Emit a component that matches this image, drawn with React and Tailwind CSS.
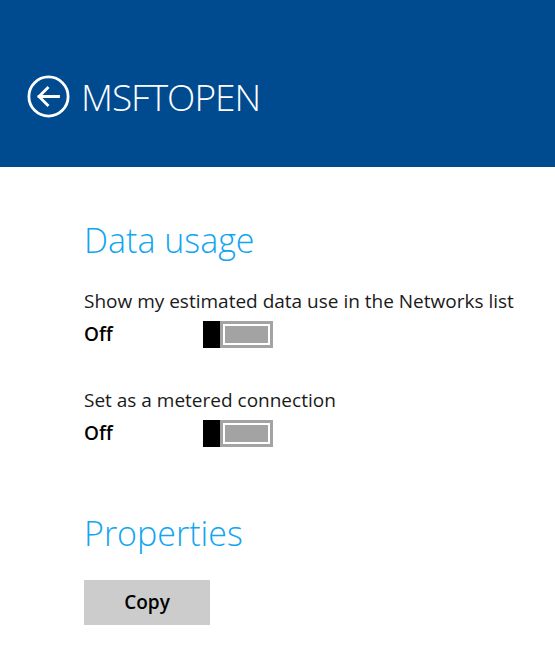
import React from 'react';

const Toggle = () => (
  <div className="flex h-[27px] w-[70px]">
    <div className="w-[17px] h-full bg-black" />
    <div className="flex-1 h-full bg-[#a3a3a3] p-[3px]">
      <div className="h-full w-full border-2 border-white bg-[#a3a3a3]" />
    </div>
  </div>
);

const Setting = ({ label }) => (
  <div>
    <div className="text-[19px] leading-[28px] text-[#1a1a1a]">{label}</div>
    <div className="flex items-center h-[27px] mt-[6px]">
      <span className="w-[119px] text-[19px] font-semibold text-black">Off</span>
      <Toggle />
    </div>
  </div>
);

export default function App() {
  return (
    <div className="w-[555px] h-[650px] bg-white overflow-hidden" style={{ fontFamily: '"Open Sans", "Noto Sans", sans-serif' }}>
      <header className="h-[167px] bg-[#004a8f] flex items-center pl-[27px] pt-[26px]">
        <svg width="43" height="43" viewBox="0 0 43 43" fill="none" stroke="white" strokeWidth="2.8">
          <circle cx="21.5" cy="21.5" r="19.6" />
          <path d="M12 21.5h19.5M20.5 13L12 21.5l8.5 8.5" strokeLinecap="square" />
        </svg>
        <h1 className="ml-[11px] text-[37px] font-light text-white tracking-[-1px]">MSFTOPEN</h1>
      </header>
      <main className="pl-[84px] pt-[50px]">
        <h2 className="text-[34px] font-light leading-[46px] text-[#12a6f0]">Data usage</h2>
        <div className="mt-[24px] flex flex-col gap-[38px]">
          <Setting label="Show my estimated data use in the Networks list" />
          <Setting label="Set as a metered connection" />
        </div>
        <h2 className="mt-[63px] text-[34px] font-light leading-[46px] text-[#12a6f0]">Properties</h2>
        <button className="mt-[24px] w-[126px] h-[45px] bg-[#cccccc] text-[19px] font-semibold text-black">Copy</button>
      </main>
    </div>
  );
}
